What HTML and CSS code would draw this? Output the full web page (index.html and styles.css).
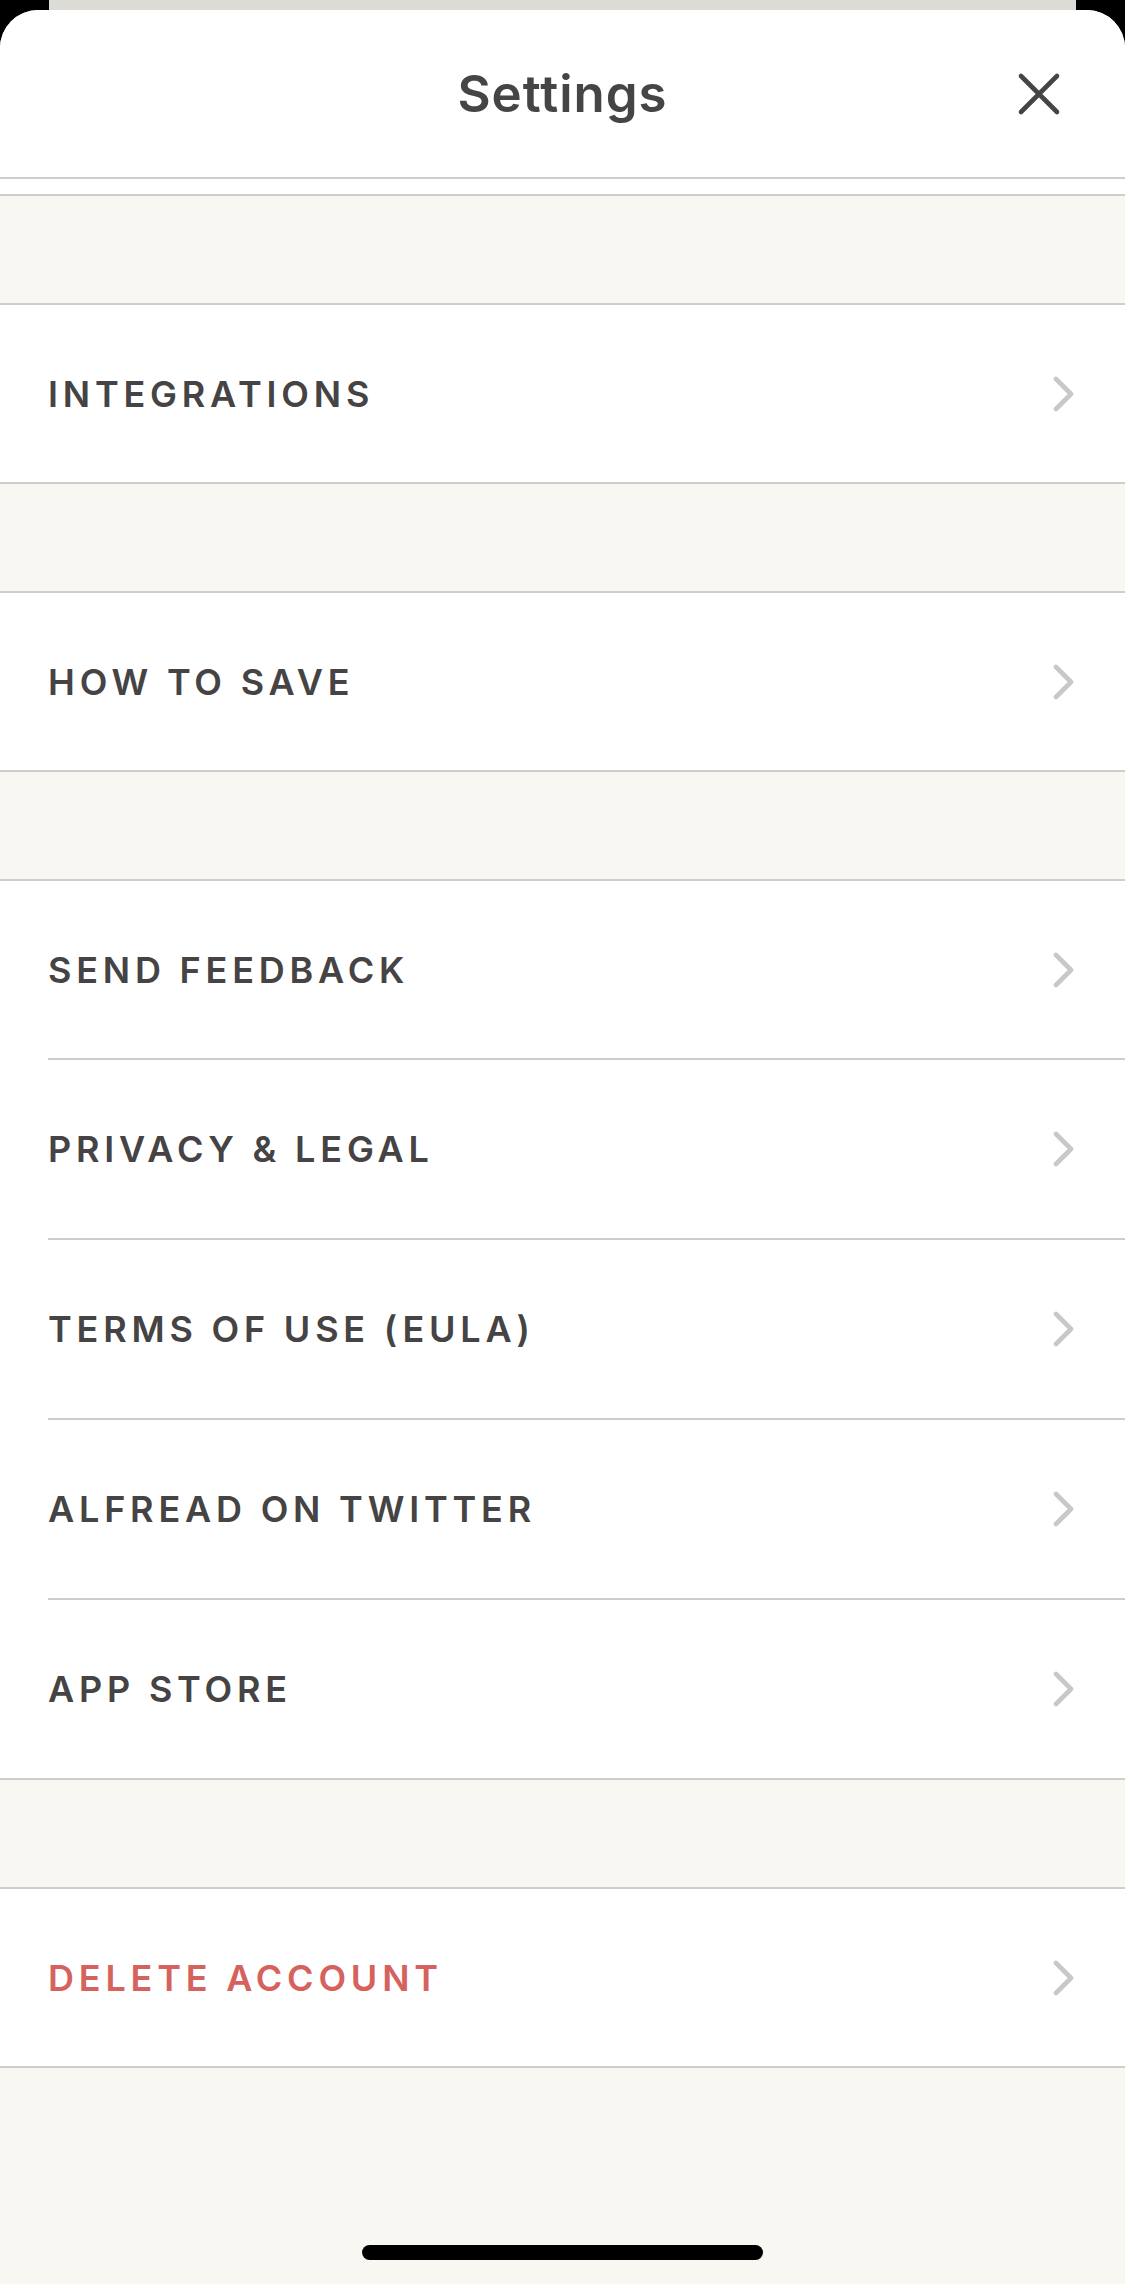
FILE: index.html
```html
<!DOCTYPE html>
<html lang="en">
<head>
<meta charset="utf-8">
<title>Settings</title>
<link rel="stylesheet" href="styles.css">
</head>
<body>
<div class="stage">
  <div class="back-card"></div>
  <div class="sheet">
    <header class="header">
      <h1 class="title">Settings</h1>
      <button class="close" aria-label="Close">
        <svg viewBox="0 0 44 44" width="44" height="44"><path d="M4 4 L40 40 M40 4 L4 40" stroke="#454545" stroke-width="4.6" stroke-linecap="round" fill="none"/></svg>
      </button>
    </header>
    <div class="scroll">
      <div class="spacer-top"></div>
      <div class="gap"></div>
      <ul class="group">
        <li class="row"><span class="label">INTEGRATIONS</span><svg class="chev" viewBox="0 0 22 36"><path d="M3 3 L18 18 L3 33" /></svg></li>
      </ul>
      <div class="gap"></div>
      <ul class="group">
        <li class="row"><span class="label">HOW TO SAVE</span><svg class="chev" viewBox="0 0 22 36"><path d="M3 3 L18 18 L3 33" /></svg></li>
      </ul>
      <div class="gap"></div>
      <ul class="group">
        <li class="row"><span class="label">SEND FEEDBACK</span><svg class="chev" viewBox="0 0 22 36"><path d="M3 3 L18 18 L3 33" /></svg></li>
        <li class="row"><span class="label">PRIVACY &amp; LEGAL</span><svg class="chev" viewBox="0 0 22 36"><path d="M3 3 L18 18 L3 33" /></svg></li>
        <li class="row"><span class="label">TERMS OF USE (EULA)</span><svg class="chev" viewBox="0 0 22 36"><path d="M3 3 L18 18 L3 33" /></svg></li>
        <li class="row"><span class="label">ALFREAD ON TWITTER</span><svg class="chev" viewBox="0 0 22 36"><path d="M3 3 L18 18 L3 33" /></svg></li>
        <li class="row"><span class="label">APP STORE</span><svg class="chev" viewBox="0 0 22 36"><path d="M3 3 L18 18 L3 33" /></svg></li>
      </ul>
      <div class="gap"></div>
      <ul class="group">
        <li class="row"><span class="label danger">DELETE ACCOUNT</span><svg class="chev" viewBox="0 0 22 36"><path d="M3 3 L18 18 L3 33" /></svg></li>
      </ul>
      <div class="bottom">
        <div class="home-indicator"></div>
      </div>
    </div>
  </div>
</div>
</body>
</html>
```
FILE: styles.css
```css
* { box-sizing: border-box; }
html, body { margin: 0; padding: 0; }
body {
  width: 1125px;
  height: 2284px;
  overflow: hidden;
  background: #000;
  font-family: Inter, "Liberation Sans", sans-serif;
}
.stage {
  display: flex;
  flex-direction: column;
  height: 2284px;
  background: #000;
}
.back-card {
  height: 60px;
  margin: 0 49px;
  background: #dcdbd5;
  flex: none;
}
.sheet {
  margin-top: -50px;
  flex: 1;
  display: flex;
  flex-direction: column;
  background: #f8f7f2;
  border-radius: 38px 38px 0 0;
  overflow: hidden;
}
.header {
  height: 169px;
  flex: none;
  background: #fff;
  border-bottom: 2px solid #cdcdca;
  display: flex;
  align-items: center;
  justify-content: center;
  position: relative;
}
.title {
  margin: 0;
  font-size: 51px;
  font-weight: 600;
  color: #454545;
  letter-spacing: 1px;
}
.close {
  position: absolute;
  right: 64px;
  top: 62px;
  width: 44px;
  height: 44px;
  padding: 0;
  border: 0;
  background: none;
  display: flex;
}
.scroll {
  flex: 1;
  display: flex;
  flex-direction: column;
}
.spacer-top {
  height: 17px;
  background: #fff;
  border-bottom: 2px solid #cdcdca;
  flex: none;
}
.gap {
  height: 107px;
  flex: none;
  background: #f8f7f2;
}
.group {
  list-style: none;
  margin: 0;
  padding: 0 0 0 48px;
  background: #fff;
  border-top: 2px solid #cdcdca;
  border-bottom: 2px solid #cdcdca;
  flex: none;
}
.row {
  height: 177px;
  display: flex;
  align-items: center;
  justify-content: space-between;
  padding-right: 50px;
}
.row + .row {
  border-top: 2px solid #cdcdca;
  height: 180px;
  padding-bottom: 1px;
}
.label {
  font-size: 36px;
  font-weight: 600;
  color: #454343;
  letter-spacing: 4.8px;
}
.label.danger { color: #d6625d; }
.chev {
  width: 22px;
  height: 36px;
  fill: none;
  stroke: #c8c8c8;
  stroke-width: 4.6;
  stroke-linecap: round;
  stroke-linejoin: round;
}
.bottom {
  flex: 1;
  display: flex;
  justify-content: center;
  align-items: flex-end;
  padding-bottom: 24px;
}
.home-indicator {
  width: 401px;
  height: 15px;
  border-radius: 8px;
  background: #000;
}
```
